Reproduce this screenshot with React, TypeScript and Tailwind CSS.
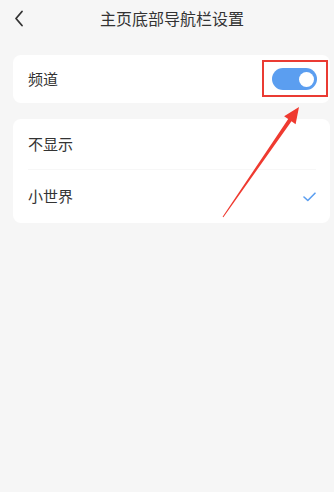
import React from "react";

export default function App() {
  const font = { fontFamily: '"Noto Sans CJK SC", "Noto Sans", sans-serif' };
  return (
    <div className="relative w-full h-[492px] bg-[#f6f6f6] overflow-hidden" style={font}>
      <div className="grid grid-cols-[1fr_auto_1fr] items-center h-9 pl-[14px] pr-[4px]">
        <svg width="10" height="17" viewBox="0 0 10 17" fill="none" className="mt-[1px]">
          <path d="M8 1.5L2 8.5L8 15.5" stroke="#333" strokeWidth="1.8" strokeLinecap="round" strokeLinejoin="round" />
        </svg>
        <div className="text-[16px] text-[#333] leading-none">主页底部导航栏设置</div>
        <div />
      </div>

      <div className="mt-[19px] ml-[13px] mr-[4px] h-[48px] rounded-lg bg-white flex items-center justify-between pl-[15px] pr-[13px]">
        <span className="text-[15px] text-[#333]">频道</span>
        <div className="relative w-[45px] h-[22px] rounded-full bg-[#5b9ef0] flex items-center justify-end pr-[3px]">
          <div className="w-[15px] h-[15px] rounded-full bg-white" />
          <div className="absolute -left-[10px] -top-[8px] -right-[11px] -bottom-[7px] border-2 border-[#ea3b33]" />
        </div>
      </div>

      <div className="mt-[16px] ml-[13px] mr-[4px] rounded-lg bg-white pl-[15px] pr-[14px]">
        <div className="h-[51px] flex items-center border-b border-[#f7f7f7]">
          <span className="text-[15px] text-[#333]">不显示</span>
        </div>
        <div className="h-[53px] flex items-center justify-between">
          <span className="text-[15px] text-[#333]">小世界</span>
          <svg width="13" height="10" viewBox="0 0 13 10" fill="none">
            <path d="M1 5L4.8 8.5L12 1.2" stroke="#5b9ef0" strokeWidth="1.6" strokeLinecap="round" strokeLinejoin="round" />
          </svg>
        </div>
      </div>

      <svg className="absolute left-0 top-0 pointer-events-none" width="334" height="492" viewBox="0 0 334 492">
        <polygon
          points="222.6,216.7 223.4,217.3 291.5,121.3 295.6,124.2 299,107 284.1,116.2 288.2,119"
          fill="#ef3a30"
        />
      </svg>
    </div>
  );
}
